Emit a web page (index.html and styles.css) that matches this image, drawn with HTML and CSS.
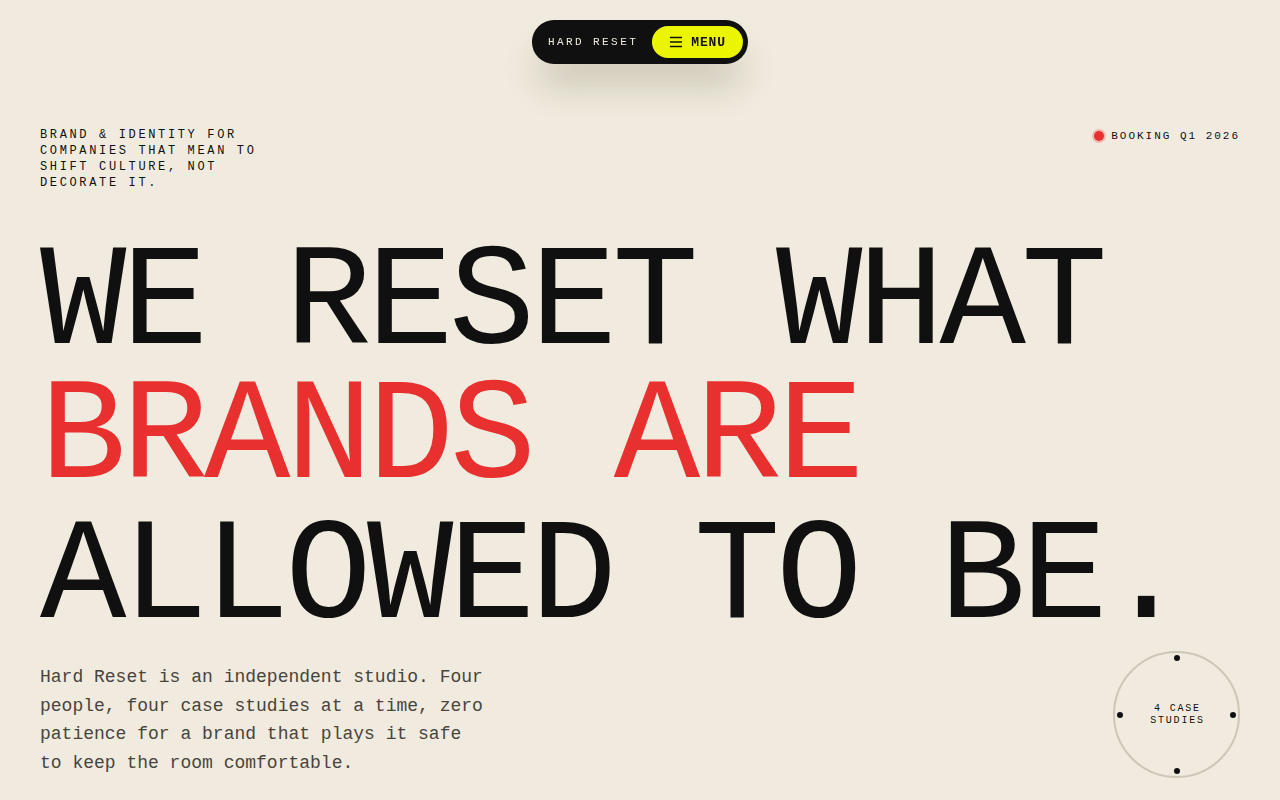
FILE: index.html
```html
<!DOCTYPE html>
<html lang="en">
<head>
<meta charset="utf-8">
<title>Hard Reset</title>
<link rel="stylesheet" href="styles.css">
</head>
<body>
<nav class="nav">
  <span class="nav-brand">HARD RESET</span>
  <button class="nav-menu" type="button">
    <svg class="nav-icon" width="14" height="12" viewBox="0 0 14 12" aria-hidden="true">
      <path d="M1 1.5h12M1 6h12M1 10.5h12" stroke="#111" stroke-width="1.4" fill="none"/>
    </svg>
    <span>MENU</span>
  </button>
</nav>
<main class="page">
  <div class="top-row">
    <p class="tagline">BRAND &amp; IDENTITY FOR COMPANIES THAT MEAN TO SHIFT CULTURE, NOT DECORATE IT.</p>
    <p class="booking"><span class="booking-dot"></span>BOOKING Q1 2026</p>
  </div>
  <h1 class="headline">
    <span class="line">WE RESET WHAT</span>
    <span class="line line-red">BRANDS ARE</span>
    <span class="line">ALLOWED TO BE.</span>
  </h1>
  <div class="bottom-row">
    <p class="intro">Hard Reset is an independent studio. Four people, four case studies at a time, zero patience for a brand that plays it safe to keep the room comfortable.</p>
    <div class="badge">
      <span class="badge-dot dot-top"></span>
      <span class="badge-dot dot-right"></span>
      <span class="badge-dot dot-bottom"></span>
      <span class="badge-dot dot-left"></span>
      <span class="badge-text">4 CASE<br>STUDIES</span>
    </div>
  </div>
</main>
</body>
</html>
```

FILE: styles.css
```css
* { box-sizing: border-box; }

html, body {
  margin: 0;
  padding: 0;
  background: #f0ebde;
  color: #111010;
  font-family: "Liberation Mono", "DejaVu Sans Mono", monospace;
}

.nav {
  position: fixed;
  top: 20px;
  left: 50%;
  transform: translateX(-50%);
  display: flex;
  align-items: center;
  gap: 14px;
  height: 44px;
  padding: 0 5px 0 16px;
  background: #111010;
  border-radius: 22px;
  box-shadow: 0 26px 36px -6px rgba(60, 50, 20, 0.22);
  z-index: 10;
}

.nav-brand {
  color: #f0ebde;
  font-size: 11px;
  letter-spacing: 0.22em;
  line-height: 1;
}

.nav-menu {
  display: flex;
  align-items: center;
  gap: 8px;
  height: 32px;
  padding: 0 17px 0 17px;
  border: 0;
  border-radius: 16px;
  background: #ebf500;
  color: #111010;
  font-family: "Liberation Mono", "DejaVu Sans Mono", monospace;
  font-weight: 700;
  font-size: 13px;
  letter-spacing: 0.07em;
  cursor: pointer;
}

.nav-icon { display: block; }

.page {
  padding: 127px 40px 0;
}

.top-row {
  display: flex;
  justify-content: space-between;
  align-items: flex-start;
}

.tagline {
  margin: 0;
  max-width: 240px;
  font-size: 12px;
  line-height: 16px;
  letter-spacing: 0.22em;
}

.booking {
  margin: 1px 0 0;
  display: flex;
  align-items: center;
  gap: 7px;
  font-size: 11px;
  line-height: 16px;
  letter-spacing: 0.18em;
}

.booking-dot {
  width: 10px;
  height: 10px;
  border-radius: 50%;
  background: #e8302f;
  box-shadow: 0 0 0 2px rgba(232, 48, 47, 0.25);
}

.headline {
  margin: 45px 0 0;
  font-size: 144px;
  font-weight: 400;
  line-height: 137px;
  letter-spacing: -4.65px;
  white-space: nowrap;
}

.line { display: block; }

.line-red {
  color: #e8302f;
  letter-spacing: -4.45px;
  transform: translateY(-3px);
}

.bottom-row {
  display: flex;
  justify-content: space-between;
  align-items: flex-end;
  margin-top: 4px;
}

.intro {
  margin: 0;
  max-width: 450px;
  font-size: 18px;
  line-height: 28.8px;
  color: #48443d;
}

.badge {
  position: relative;
  width: 127px;
  height: 127px;
  border: 2px solid #cdc7b8;
  border-radius: 50%;
  display: flex;
  align-items: center;
  justify-content: center;
}

.badge-text {
  font-size: 10px;
  line-height: 12px;
  letter-spacing: 0.18em;
  text-align: center;
  margin-right: -2px;
}

.badge-dot {
  position: absolute;
  width: 6px;
  height: 6px;
  border-radius: 50%;
  background: #111010;
}

.dot-top { top: 2px; left: 50%; margin-left: -3px; }
.dot-bottom { bottom: 2px; left: 50%; margin-left: -3px; }
.dot-left { left: 2px; top: 50%; margin-top: -3px; }
.dot-right { right: 2px; top: 50%; margin-top: -3px; }
```
